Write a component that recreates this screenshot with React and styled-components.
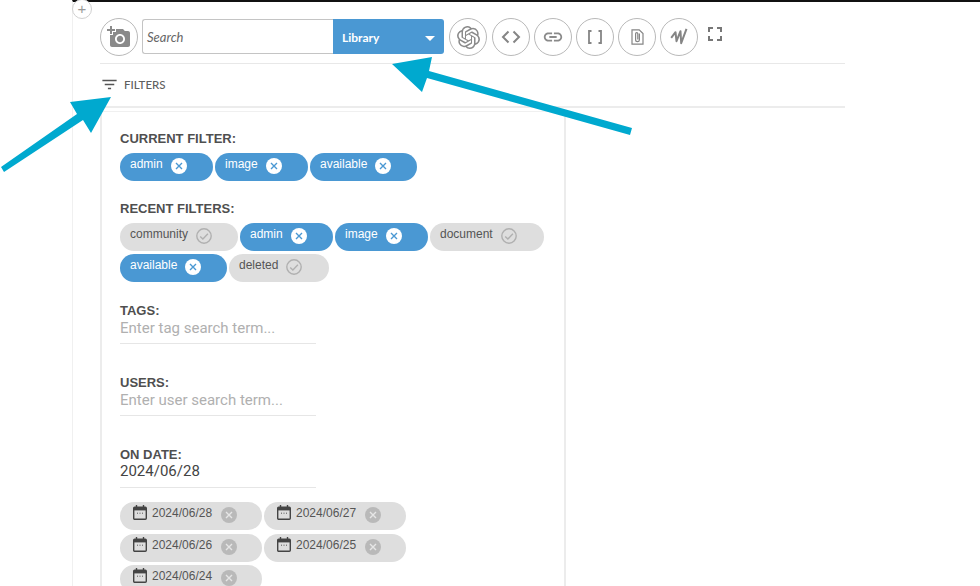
import React from "react";
import styled, { createGlobalStyle } from "styled-components";
import { SiOpenai } from "react-icons/si";
import {
  MdAddAPhoto,
  MdLink,
  MdFullscreen,
  MdFilterList,
  MdArrowDropDown,
} from "react-icons/md";

const GlobalStyle = createGlobalStyle`
  html, body {
    margin: 0;
    padding: 0;
    background: #fff;
    overflow: hidden;
  }
  body {
    font-family: "Liberation Sans", Arial, sans-serif;
  }
`;

const Page = styled.div`
  position: relative;
  width: 980px;
  height: 586px;
  overflow: hidden;
  box-sizing: border-box;
  padding-left: 72px;
`;

const Frame = styled.div`
  min-height: 100%;
  box-sizing: border-box;
  border-top: 2px solid #111;
  border-left: 1px solid #f0f0f0;
  padding: 16px 0 0 27px;
`;

const AddBlock = styled.div`
  position: absolute;
  left: 72px;
  top: -1px;
  width: 18px;
  height: 18px;
  border: 1px solid #d0d0d0;
  border-radius: 50%;
  background: #fff;
  color: #999;
  font-size: 15px;
  line-height: 17px;
  text-align: center;
  font-weight: 300;
`;

const Toolbar = styled.div`
  display: flex;
  align-items: center;
  height: 38px;
  padding-bottom: 7px;
  border-bottom: 1px solid #e8e8e8;
  width: 745px;
`;

const CircleButton = styled.button`
  width: 38px;
  height: 38px;
  flex: none;
  box-sizing: border-box;
  border: 1px solid #b9b9b9;
  border-radius: 50%;
  background: #fff;
  color: #8a8a8a;
  padding: 0;
  margin-right: ${(props) => props.$gap || 4}px;
  display: flex;
  align-items: center;
  justify-content: center;
`;

const SearchGroup = styled.div`
  display: flex;
  width: 302px;
  height: 35px;
  flex: none;
  margin: -1px 5px 0 0;
`;

const SearchInput = styled.div`
  flex: 1;
  box-sizing: border-box;
  border: 1px solid #c4c4c4;
  border-right: none;
  border-radius: 3px 0 0 3px;
  padding-left: 4px;
  font-family: Lato, sans-serif;
  font-style: italic;
  font-size: 13px;
  line-height: 35px;
  color: #666;
`;

const LibrarySelect = styled.div`
  width: 111px;
  box-sizing: border-box;
  background: #4a98d3;
  border-radius: 0 3px 3px 0;
  color: #fff;
  font-family: Lato, sans-serif;
  font-weight: 700;
  font-size: 12px;
  display: flex;
  align-items: center;
  justify-content: space-between;
  padding: 2px 2px 0 9px;
`;

const ExpandIcon = styled.div`
  color: #777;
  display: flex;
  margin: -6px 0 0 1px;
`;

const FiltersBar = styled.div`
  display: flex;
  align-items: center;
  gap: 5px;
  height: 44px;
  width: 745px;
  padding-bottom: 2px;
  box-sizing: border-box;
  border-bottom: 2px solid #ececec;
  color: #5f5f5f;
  font-family: Lato, sans-serif;
  font-size: 11.5px;
  font-weight: 500;
`;

const FilterIcon = styled.div`
  display: flex;
  color: #555;
`;

const Panel = styled.div`
  width: 466px;
  margin-top: 3px;
  box-sizing: border-box;
  border-left: 2px solid #ececec;
  border-right: 2px solid #ececec;
  border-top: 1px solid #f0f0f0;
  padding: 19px 0 40px 18px;
`;

const Section = styled.div`
  margin-bottom: ${(props) => props.$after || 0}px;
`;

const Label = styled.div`
  font-size: 13px;
  font-weight: 700;
  line-height: 15px;
  color: #4f4f4f;
`;

const ChipRow = styled.div`
  display: flex;
  flex-wrap: wrap;
  gap: 3px 2px;
  margin-top: 7px;
  width: 430px;
`;

const Chip = styled.div`
  display: flex;
  align-items: flex-start;
  box-sizing: border-box;
  width: ${(props) => props.$width}px;
  height: 28px;
  padding: 4px 0 0 10px;
  border-radius: 14px;
  background: ${(props) => (props.$active ? "#4a98d3" : "#dedede")};
  color: ${(props) => (props.$active ? "#fff" : "#555")};
  font-size: 12px;
  line-height: 14px;
`;

const ChipIcon = styled.svg`
  flex: none;
  margin: 1px 0 0 ${(props) => props.$left || 8}px;
`;

const FieldLabel = styled(Label)`
  margin-top: ${(props) => props.$top || 0}px;
`;

const FieldValue = styled.div`
  width: 196px;
  height: 26px;
  padding-top: ${(props) => (props.$placeholder ? 1 : 0)}px;
  box-sizing: border-box;
  border-bottom: 1px solid #e6e6e6;
  font-family: Roboto, sans-serif;
  font-size: 15px;
  line-height: 18px;
  font-weight: 400;
  color: ${(props) => (props.$placeholder ? "#b0b0b0" : "#444")};
`;

const DateRow = styled(ChipRow)`
  margin-top: 14px;
  gap: 3.5px 2px;
  width: 300px;
`;

const DateChip = styled(Chip)`
  padding-left: 12px;
  color: #555;
`;

const Overlay = styled.svg`
  position: absolute;
  left: 0;
  top: 0;
  pointer-events: none;
`;

const RemoveIcon = ({ active, left }) => (
  <ChipIcon $left={left} width="16" height="16" viewBox="0 0 16 16">
    <circle cx="8" cy="8" r="8" fill={active ? "#fff" : "#b9b9b9"} />
    <path
      d="M5 5l6 6M11 5l-6 6"
      stroke={active ? "#4a98d3" : "#e6e6e6"}
      strokeWidth="1.4"
    />
  </ChipIcon>
);

const CheckIcon = () => (
  <ChipIcon width="16" height="16" viewBox="0 0 16 16" fill="none">
    <circle cx="8" cy="8" r="7.2" stroke="#b0b0b0" strokeWidth="1.4" />
    <path d="M4.2 8.4l2.7 2.7 5-5.4" stroke="#b0b0b0" strokeWidth="1.4" />
  </ChipIcon>
);

const CalendarIcon = () => (
  <svg
    width="14"
    height="15"
    viewBox="0 0 14 15"
    fill="none"
    style={{ flex: "none", margin: "-1px 5px 0 1px" }}
  >
    <rect x="0.7" y="2.2" width="12.6" height="12" rx="1" stroke="#444" strokeWidth="1.4" />
    <path d="M0.7 3h12.6v2.4H0.7z" fill="#444" />
    <path d="M3.5 0v3M10.5 0v3" stroke="#444" strokeWidth="1.4" />
    <path d="M4 8.2h1M6.5 8.2h1M9 8.2h1" stroke="#555" />
  </svg>
);

const ChevronsIcon = () => (
  <svg width="22" height="14" viewBox="0 0 22 14" fill="none" stroke="#858585" strokeWidth="2">
    <path d="M8.5 1.5L3 7l5.5 5.5M13.5 1.5L19 7l-5.5 5.5" />
  </svg>
);

const BracketsIcon = () => (
  <svg width="18" height="18" viewBox="0 0 18 18" fill="none" stroke="#858585" strokeWidth="1.8">
    <path d="M5.5 3H3v12h2.5M12.5 3H15v12h-2.5" />
  </svg>
);

const FileClipIcon = () => (
  <svg width="13" height="16" viewBox="0 0 13 16" fill="none" stroke="#858585" strokeWidth="1.2">
    <path d="M1 .8h7.2L12 4.6v10.6H1z" />
    <path d="M8.4 4.6v6.2a1.9 1.9 0 0 1-3.8 0V4.8a1.1 1.1 0 0 1 2.2 0v5.6" />
  </svg>
);

const WaveIcon = () => (
  <svg width="24" height="22" viewBox="0 0 24 22" fill="none" stroke="#858585" strokeWidth="2">
    <path d="M4.2 11.8L8.5 6.2l1 9 4-10 .7 12 5.3-14.4" strokeLinejoin="round" />
  </svg>
);

const chipsCurrent = [
  { text: "admin", width: 93, active: true },
  { text: "image", width: 93, active: true },
  { text: "available", width: 107, active: true },
];

const chipsRecent = [
  { text: "community", width: 118 },
  { text: "admin", width: 93, active: true },
  { text: "image", width: 93, active: true },
  { text: "document", width: 114 },
  { text: "available", width: 107, active: true },
  { text: "deleted", width: 100 },
];

const dates = ["2024/06/28", "2024/06/27", "2024/06/26", "2024/06/25", "2024/06/24"];

const App = () => {
  return (
    <Page>
      <GlobalStyle />
      <Frame>
        <Toolbar>
          <CircleButton>
            <MdAddAPhoto size={24} />
          </CircleButton>
          <SearchGroup>
            <SearchInput>Search</SearchInput>
            <LibrarySelect>
              Library
              <MdArrowDropDown size={24} />
            </LibrarySelect>
          </SearchGroup>
          <CircleButton $gap={5}>
            <SiOpenai size={23} />
          </CircleButton>
          <CircleButton>
            <ChevronsIcon />
          </CircleButton>
          <CircleButton>
            <MdLink size={22} />
          </CircleButton>
          <CircleButton>
            <BracketsIcon />
          </CircleButton>
          <CircleButton>
            <FileClipIcon />
          </CircleButton>
          <CircleButton>
            <WaveIcon />
          </CircleButton>
          <ExpandIcon>
            <MdFullscreen size={24} />
          </ExpandIcon>
        </Toolbar>
        <FiltersBar>
          <FilterIcon>
            <MdFilterList size={19} />
          </FilterIcon>
          FILTERS
        </FiltersBar>
        <Panel>
          <Section $after={20}>
            <Label>CURRENT FILTER:</Label>
            <ChipRow>
              {chipsCurrent.map((chip) => (
                <Chip key={chip.text} $active $width={chip.width}>
                  {chip.text}
                  <RemoveIcon active />
                </Chip>
              ))}
            </ChipRow>
          </Section>
          <Section $after={21}>
            <Label>RECENT FILTERS:</Label>
            <ChipRow>
              {chipsRecent.map((chip) => (
                <Chip key={chip.text} $active={chip.active} $width={chip.width}>
                  {chip.text}
                  {chip.active ? <RemoveIcon active /> : <CheckIcon />}
                </Chip>
              ))}
            </ChipRow>
          </Section>
          <FieldLabel>TAGS:</FieldLabel>
          <FieldValue $placeholder>Enter tag search term...</FieldValue>
          <FieldLabel $top={31}>USERS:</FieldLabel>
          <FieldValue $placeholder>Enter user search term...</FieldValue>
          <FieldLabel $top={31}>ON DATE:</FieldLabel>
          <FieldValue>2024/06/28</FieldValue>
          <DateRow>
            {dates.map((date) => (
              <DateChip key={date} $width={142}>
                <CalendarIcon />
                {date}
                <RemoveIcon left={9} />
              </DateChip>
            ))}
          </DateRow>
        </Panel>
      </Frame>
      <Overlay width="980" height="586" viewBox="0 0 980 586">
        <g fill="#00a9cf">
          <path d="M1 167L77 114 70 102 111 97 91 133 83 120 4 172z" />
          <path d="M392 64L432 57 429 71 632 128 630 135 427 78 422 92z" />
        </g>
      </Overlay>
      <AddBlock>+</AddBlock>
    </Page>
  );
};

export default App;
